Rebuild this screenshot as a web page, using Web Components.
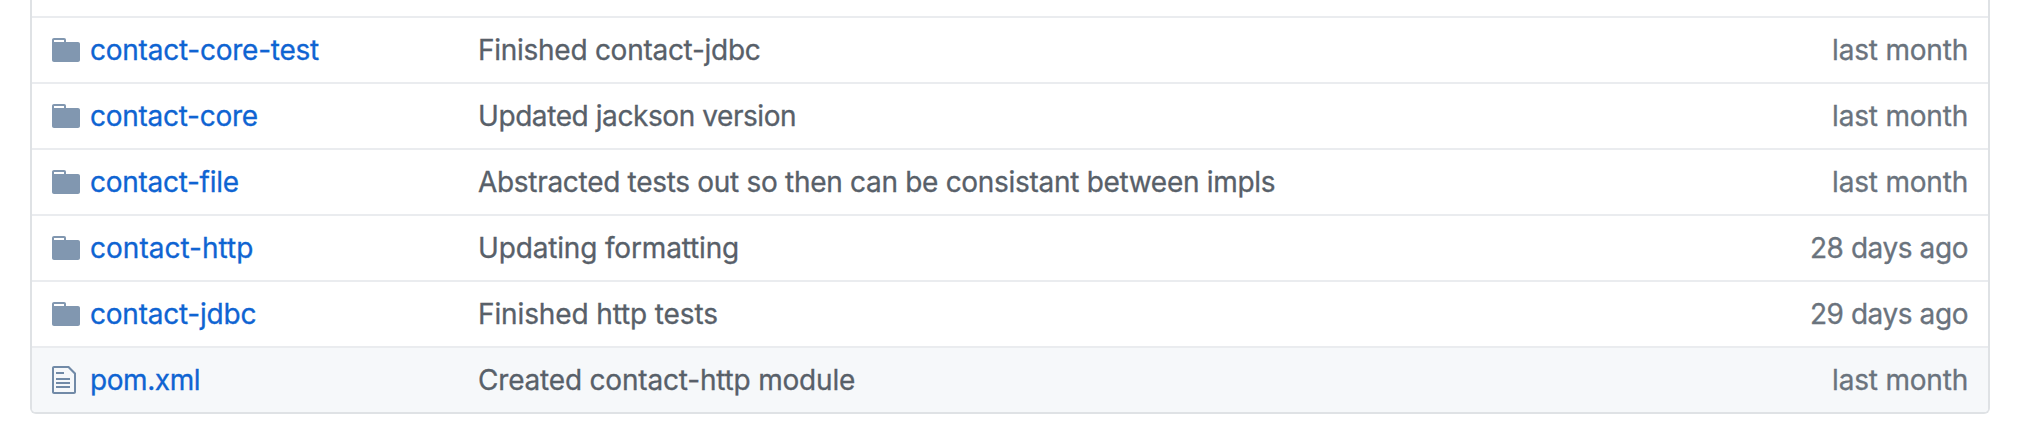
<!DOCTYPE html>
<html lang="en">
<head>
<meta charset="utf-8">
<title>Repository files</title>
<style>
body { margin: 0; background: #fff; font: 28px/40px Inter, "Liberation Sans", sans-serif; -webkit-text-stroke: 0.3px; overflow: hidden; }
</style>
</head>
<body>
<file-list>
  <file-row kind="dir" tracking="-0.24 -0.27 -0.2"><span slot="name">contact-core-test</span><span slot="message">Finished contact-jdbc</span><span slot="age">last month</span></file-row>
  <file-row kind="dir" tracking="-0.27 -0.42 -0.2"><span slot="name">contact-core</span><span slot="message">Updated jackson version</span><span slot="age">last month</span></file-row>
  <file-row kind="dir" tracking="-0.28 -0.3 -0.2"><span slot="name">contact-file</span><span slot="message">Abstracted tests out so then can be consistant between impls</span><span slot="age">last month</span></file-row>
  <file-row kind="dir" tracking="0.02 -0.16 -0.43"><span slot="name">contact-http</span><span slot="message">Updating formatting</span><span slot="age">28 days ago</span></file-row>
  <file-row kind="dir" tracking="-0.23 -0.12 -0.43"><span slot="name">contact-jdbc</span><span slot="message">Finished http tests</span><span slot="age">29 days ago</span></file-row>
  <file-row kind="file" active tracking="-0.42 -0.19 -0.2"><span slot="name">pom.xml</span><span slot="message">Created contact-http module</span><span slot="age">last month</span></file-row>
</file-list>

<template id="list-template">
  <style>
    :host { display: block; box-sizing: border-box; margin: 0 36px 0 30px; padding-top: 16px; border: solid #dfe2e5; border-width: 0 2px 2px; border-radius: 0 0 6px 6px; overflow: hidden; }
  </style>
  <slot></slot>
</template>

<template id="row-template">
  <style>
    :host { display: grid; grid-template-columns: 58px 388px 1fr auto; box-sizing: border-box; height: 66px; padding: 12px 20px 12px 0; border-top: 2px solid #eaecef; white-space: nowrap; }
    :host([active]) { background: #f6f8fa; }
    file-icon { margin: 4px 0 0 20px; }
    .name { color: #0f64d2; text-decoration: none; }
    .message { color: #586069; }
    .age { color: #6a737d; text-align: right; }
  </style>
  <file-icon></file-icon>
  <a class="name"><slot name="name"></slot></a>
  <div class="message"><slot name="message"></slot></div>
  <div class="age"><slot name="age"></slot></div>
</template>

<script>
const ICONS = {
  dir: [14, 'M13 4H7V3c0-.66-.31-1-1-1H1c-.55 0-1 .45-1 1v10c0 .55.45 1 1 1h12c.55 0 1-.45 1-1V5c0-.55-.45-1-1-1zM6 4H1V3h5v1z'],
  file: [12, 'M6 5H2V4h4v1zM2 8h7V7H2v1zm0 2h7V9H2v1zm0 2h7v-1H2v1zm10-7.5V14c0 .55-.45 1-1 1H1c-.55 0-1-.45-1-1V2c0-.55.45-1 1-1h7.5L12 4.5zM11 5L8 2H1v12h10V5z']
};
customElements.define('file-icon', class extends HTMLElement {
  static observedAttributes = ['kind'];
  constructor() { super(); this.attachShadow({ mode: 'open' }); }
  attributeChangedCallback() {
    const [w, d] = ICONS[this.getAttribute('kind')];
    this.shadowRoot.innerHTML = `<style>:host{display:block;height:32px}svg{display:block;fill:rgba(3,47,98,${w === 12 ? .55 : .5})}</style><svg width="${w * 2}" height="32" viewBox="0 0 ${w} 16" aria-hidden="true"><path fill-rule="evenodd" d="${d}"/></svg>`;
  }
});
customElements.define('file-row', class extends HTMLElement {
  connectedCallback() {
    const root = this.attachShadow({ mode: 'open' });
    root.append(document.getElementById('row-template').content.cloneNode(true));
    root.querySelector('file-icon').setAttribute('kind', this.getAttribute('kind'));
    const tracking = this.getAttribute('tracking').split(' ');
    ['name', 'message', 'age'].forEach((part, i) => {
      root.querySelector('.' + part).style.letterSpacing = tracking[i] + 'px';
    });
  }
});
customElements.define('file-list', class extends HTMLElement {
  connectedCallback() {
    this.attachShadow({ mode: 'open' }).append(document.getElementById('list-template').content.cloneNode(true));
  }
});
</script>
</body>
</html>
